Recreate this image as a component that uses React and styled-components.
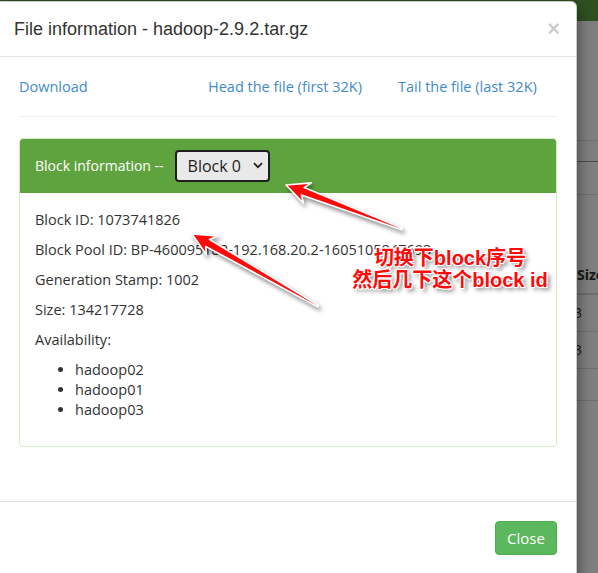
import React from 'react';
import styled, { createGlobalStyle } from 'styled-components';

const GlobalStyle = createGlobalStyle`
  html, body { margin: 0; padding: 0; }
  body {
    width: 598px; height: 573px; overflow: hidden;
    font-family: "Open Sans", "Noto Sans", sans-serif;
    color: #333;
  }
  * { box-sizing: border-box; }
`;

const Screen = styled.div`
  position: relative;
  width: 598px;
  height: 573px;
  overflow: hidden;
  background: #fff;
`;

/* ---------- background page (dimmed by backdrop) ---------- */
const Navbar = styled.div`
  height: 21px;
  background: #5fa33e;
`;

const PageRule = styled.div`
  height: ${(p) => p.$h}px;
  border-bottom: 1px solid ${(p) => (p.$dark ? '#9a9a9a' : '#dcdcdc')};
`;

const TableWrap = styled.div`
  margin-top: 62px;
  padding-left: 569px;
`;

const Table = styled.table`
  border-collapse: collapse;
  font-size: 14px;
  font-family: "Open Sans", sans-serif;
  width: 120px;
`;

const Th = styled.th`
  text-align: left;
  padding: 8px;
  line-height: 20px;
  border-bottom: 2px solid #ddd;
  font-weight: 700;
`;

const Td = styled.td`
  padding: 8px 8px 8px 5px;
  line-height: 20px;
  border-bottom: 1px solid #ddd;
`;

const Backdrop = styled.div`
  position: absolute;
  inset: 0;
  background: rgba(0, 0, 0, 0.5);
`;

/* ---------- modal ---------- */
const Modal = styled.div`
  position: absolute;
  left: -6px;
  top: 1px;
  width: 583px;
  height: 620px;
  background: #fff;
  border: 1px solid rgba(0, 0, 0, 0.2);
  border-radius: 6px;
  box-shadow: 0 5px 15px rgba(0, 0, 0, 0.5);
  display: flex;
  flex-direction: column;
`;

const ModalHeader = styled.div`
  height: 55px;
  display: flex;
  align-items: center;
  justify-content: space-between;
  padding: 0 16px 0 19px;
  border-bottom: 1px solid #e5e5e5;
`;

const ModalTitle = styled.h4`
  margin: 0;
  font-family: "Liberation Sans", Arial, sans-serif;
  font-size: 18px;
  font-weight: 400;
  color: #333;
`;

const CloseX = styled.button`
  border: 0;
  background: none;
  padding: 0;
  font-family: "Liberation Sans", Arial, sans-serif;
  font-size: 22px;
  font-weight: 700;
  line-height: 1;
  color: #000;
  opacity: 0.2;
`;

const ModalBody = styled.div`
  padding: 20px 19px 34px 24px;
`;

const LinkRow = styled.div`
  display: grid;
  grid-template-columns: 189px 190px 1fr;
  font-size: 14.5px;
  line-height: 20px;
`;

const Link = styled.a`
  color: #428bca;
  text-decoration: none;
`;

const Rule = styled.hr`
  margin: 19px 0 21px;
  border: 0;
  border-top: 1px solid #eee;
`;

const Panel = styled.div`
  border: 1px solid #d6e9c6;
  border-radius: 4px;
  margin-bottom: 20px;
  overflow: hidden;
`;

const PanelHeading = styled.div`
  height: 54px;
  background: #5fa33e;
  display: flex;
  align-items: center;
  gap: 11px;
  padding: 0 15px 1px;
  color: #fff;
  font-size: 14px;
`;

const SelectWrap = styled.div`
  position: relative;
  width: 95px;
  height: 32px;
`;

const Select = styled.select`
  appearance: none;
  width: 100%;
  height: 100%;
  border: 2px solid #1f1f1f;
  border-radius: 4px;
  background: #e9e9e9;
  color: #222;
  font-family: "Open Sans", sans-serif;
  font-size: 16px;
  padding: 0 0 0 11px;
  outline: none;
`;

const Chevron = styled.svg`
  position: absolute;
  right: 7px;
  top: 12px;
  pointer-events: none;
`;

const PanelBody = styled.div`
  padding: 17px 15px 16px;
  font-size: 14.5px;
  line-height: 20px;
`;

const Para = styled.p`
  margin: 0 0 10px;
`;

const List = styled.ul`
  margin: 0 0 10px;
  padding-left: 40px;
`;

const ModalFooter = styled.div`
  border-top: 1px solid #e5e5e5;
  padding: 19px 19px;
  display: flex;
  justify-content: flex-end;
`;

const Button = styled.button`
  width: 62px;
  height: 34px;
  background: #5cb85c;
  border: 1px solid #4cae4c;
  border-radius: 4px;
  color: #fff;
  font-family: "Open Sans", sans-serif;
  font-size: 15px;
`;

/* ---------- annotations ---------- */
const ArrowLayer = styled.svg`
  position: absolute;
  left: 0;
  top: 0;
  pointer-events: none;
  filter: drop-shadow(2px 3px 2px rgba(0, 0, 0, 0.45));
`;

const Note = styled.div`
  position: absolute;
  left: 340px;
  top: 247px;
  width: 220px;
  text-align: center;
  font-family: "Liberation Sans", "Noto Sans CJK SC", sans-serif;
  font-weight: 700;
  font-size: 20px;
  line-height: 22px;
  color: #ff0a0a;
  text-shadow:
    1px 0 0 #fff, -1px 0 0 #fff, 0 1px 0 #fff, 0 -1px 0 #fff,
    1px 1px 0 #fff, -1px -1px 0 #fff, 1px -1px 0 #fff, -1px 1px 0 #fff,
    3px 3px 4px rgba(0, 0, 0, 0.55);
`;

function arrowPoints(tip, tail) {
  const dx = tail[0] - tip[0];
  const dy = tail[1] - tip[1];
  const len = Math.hypot(dx, dy);
  const ux = dx / len;
  const uy = dy / len;
  const nx = -uy;
  const ny = ux;
  const p = (a, b) => [tip[0] + ux * a + nx * b, tip[1] + uy * a + ny * b];
  const pts = [
    tip,
    p(23, 11),
    p(18, 4),
    [tail[0] + nx * 0.9, tail[1] + ny * 0.9],
    [tail[0] - nx * 0.9, tail[1] - ny * 0.9],
    p(18, -4),
    p(23, -11),
  ];
  return pts.map((q) => q.map((v) => v.toFixed(1)).join(',')).join(' ');
}

const arrows = [
  { tip: [286, 185], tail: [402, 229] },
  { tip: [192, 234], tail: [318, 306] },
];

export default function App() {
  return (
    <Screen>
      <GlobalStyle />
      <Navbar />
      <PageRule $h={120} />
      <PageRule $h={21} $dark />
      <PageRule $h={33} />
      <TableWrap>
        <Table>
          <thead>
            <tr>
              <Th>Size</Th>
            </tr>
          </thead>
          <tbody>
            <tr>
              <Td>3</Td>
            </tr>
            <tr>
              <Td>3</Td>
            </tr>
          </tbody>
        </Table>
      </TableWrap>
      <PageRule $h={32} />
      <Backdrop />

      <Modal>
        <ModalHeader>
          <ModalTitle>File information - hadoop-2.9.2.tar.gz</ModalTitle>
          <CloseX aria-label="Close">×</CloseX>
        </ModalHeader>
        <ModalBody>
          <LinkRow>
            <Link href="#">Download</Link>
            <Link href="#">Head the file (first 32K)</Link>
            <Link href="#">Tail the file (last 32K)</Link>
          </LinkRow>
          <Rule />
          <Panel>
            <PanelHeading>
              <span>Block information --</span>
              <SelectWrap>
                <Select defaultValue="0">
                  <option value="0">Block 0</option>
                  <option value="1">Block 1</option>
                </Select>
                <Chevron width="10" height="7" viewBox="0 0 10 7">
                  <path d="M1 1.2 L5 5.2 L9 1.2" fill="none" stroke="#222" strokeWidth="1.8" />
                </Chevron>
              </SelectWrap>
            </PanelHeading>
            <PanelBody>
              <Para>Block ID: 1073741826</Para>
              <Para>Block Pool ID: BP-460095182-192.168.20.2-1605105847693</Para>
              <Para>Generation Stamp: 1002</Para>
              <Para>Size: 134217728</Para>
              <Para>Availability:</Para>
              <List>
                <li>hadoop02</li>
                <li>hadoop01</li>
                <li>hadoop03</li>
              </List>
            </PanelBody>
          </Panel>
        </ModalBody>
        <ModalFooter>
          <Button>Close</Button>
        </ModalFooter>
      </Modal>

      <ArrowLayer width="598" height="573" viewBox="0 0 598 573">
        {arrows.map((a, i) => (
          <polygon
            key={i}
            points={arrowPoints(a.tip, a.tail)}
            fill="#ff0a0a"
            stroke="#fff"
            strokeWidth="1.6"
            strokeLinejoin="round"
          />
        ))}
      </ArrowLayer>
      <Note>
        切换下block序号
        <br />
        然后几下这个block id
      </Note>
    </Screen>
  );
}
